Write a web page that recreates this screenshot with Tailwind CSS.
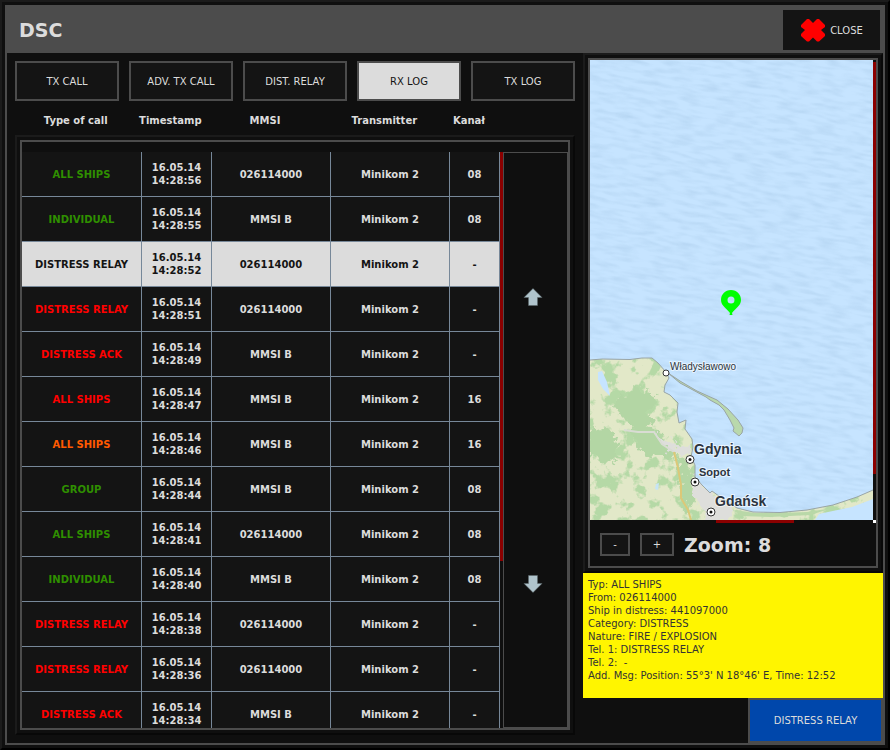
<!DOCTYPE html>
<html lang="en">

<head>
    <meta charset="UTF-8">
    <meta name="viewport" content="width=device-width, initial-scale=1.0">
    <title>DSC</title>
    <script src="https://cdn.jsdelivr.net/npm/@tailwindcss/browser@4"></script>
</head>

<body class="bg-[#0f0f0f] font-['DejaVu_Sans',sans-serif] text-[10px] leading-[13px] text-[#dcdcdc]">

    <div class="h-screen border-2 border-t-[#1b1b1b] border-l-[#1b1b1b] border-r-black border-b-black p-[3px]">
        <div class="h-full flex flex-col border-2 border-[#4c4c4c]">

            <header class="h-[46px] shrink-0 flex items-center justify-between bg-[#4c4c4c] pl-3 pr-[3px]">
                <h1 class="text-[19px] leading-6 font-bold">DSC</h1>
                <button class="w-[97px] h-10 flex items-center justify-center gap-1 bg-[#141414]">
                    <svg class="w-[26px] h-6" viewBox="0 0 26 24">
                        <path d="M1 7 L7 1 H9 L13 5 L17 1 H19 L25 7 V9 L21 12 L25 16 V18 L19 23.500 H17 L13 19.500 L9 23.500 H7 L1 18 V16 L5 12 L1 9 Z" fill="#ff0000" />
                    </svg>
                    CLOSE
                </button>
            </header>

            <div class="flex-1 min-h-0 flex">

                <main class="flex-1 min-w-0 flex flex-col p-2">
                    <nav class="grid grid-cols-5 gap-[10px]">
                        <button class="h-10 border-2 border-[#4c4c4c] bg-[#141414]">TX CALL</button>
                        <button class="h-10 border-2 border-[#4c4c4c] bg-[#141414]">ADV. TX CALL</button>
                        <button class="h-10 border-2 border-[#4c4c4c] bg-[#141414]">DIST. RELAY</button>
                        <button class="h-10 border-2 border-[#4c4c4c] bg-[#dcdcdc] text-[#141414]">RX LOG</button>
                        <button class="h-10 border-2 border-[#4c4c4c] bg-[#141414]">TX LOG</button>
                    </nav>

                    <div class="h-[34px] pt-[13px] pl-px pr-[81px]">
                        <table class="w-full table-fixed">
                            <thead>
                                <tr>
                                    <th class="p-0">Type of call</th>
                                    <th class="p-0 w-[70px]">Timestamp</th>
                                    <th class="p-0">MMSI</th>
                                    <th class="p-0">Transmitter</th>
                                    <th class="p-0 w-[50px]">Kanał</th>
                                </tr>
                            </thead>
                        </table>
                    </div>

                    <section class="flex-1 min-h-0 border-2 border-t-[#1b1b1b] border-l-[#1b1b1b] border-r-[#080808] border-b-[#080808] p-[3px]">
                        <div class="h-full flex border-2 border-[#4c4c4c] pt-[10px]">
                            <div class="flex-1 min-w-0 overflow-hidden bg-[#141414]">
                                <table class="w-full table-fixed border-separate border-spacing-0 text-center font-bold">
                                    <colgroup>
                                        <col class="w-[25.1%]">
                                        <col class="w-[70px]">
                                        <col>
                                        <col>
                                        <col class="w-[50px]">
                                    </colgroup>
                                    <tbody id="log"></tbody>
                                </table>
                            </div>
                            <div class="w-[3px]">
                                <div class="h-[71%] bg-[#8b0000]"></div>
                            </div>
                            <div class="w-[65px] flex flex-col border border-[#4c4c4c] pr-[5px]">
                                <button class="flex-1 flex items-center justify-center" aria-label="Scroll up">
                                    <svg class="w-5 h-[18px]" viewBox="0 0 20 18">
                                        <path d="M10 0.500 L19 9.500 H14.500 V17.500 H5.500 V9.500 H1 Z" fill="#b0c4cc" stroke="#5d686c" stroke-width="0.500" />
                                    </svg>
                                </button>
                                <button class="flex-1 flex items-center justify-center" aria-label="Scroll down">
                                    <svg class="w-5 h-[18px]" viewBox="0 0 20 18">
                                        <path d="M10 17.500 L19 8.500 H14.500 V0.500 H5.500 V8.500 H1 Z" fill="#b0c4cc" stroke="#5d686c" stroke-width="0.500" />
                                    </svg>
                                </button>
                            </div>
                        </div>
                    </section>
                </main>

                <aside class="w-[300px] shrink-0 flex flex-col">
                    <div class="flex-1 min-h-0 border-2 border-t-[#1b1b1b] border-l-[#1b1b1b] border-r-[#080808] border-b-[#080808] p-[3px]">
                        <div class="h-full flex flex-col border-2 border-[#4c4c4c]">
                            <div class="flex-1 min-h-0 flex">
                                <svg class="flex-1 min-w-0 h-full bg-[#c6e4ff]" viewBox="0 0 283 460" preserveAspectRatio="xMidYMid slice" font-family="'Liberation Sans', sans-serif">
                                    <defs>
                                        <!-- faint ripples on the sea -->
                                        <filter id="waves" x="0" y="0" width="100%" height="100%" color-interpolation-filters="sRGB">
                                            <feTurbulence type="fractalNoise" baseFrequency="0.05 0.22" numOctaves="2" seed="4" />
                                            <feColorMatrix values="0 0 0 0 0.66  0 0 0 0 0.79  0 0 0 0 0.91  0 2 0 0 -0.8" />
                                        </filter>
                                        <!-- woods: noise cut at a threshold -->
                                        <filter id="woods" x="0" y="0" width="100%" height="100%" color-interpolation-filters="sRGB">
                                            <feTurbulence type="fractalNoise" baseFrequency="0.07" numOctaves="4" seed="11" />
                                            <feColorMatrix values="0 0 0 0 0.71  0 0 0 0 0.85  0 0 0 0 0.65  0 9 0 0 -4.6" />
                                        </filter>
                                        <filter id="ragged">
                                            <feTurbulence type="fractalNoise" baseFrequency="0.12" numOctaves="3" seed="3" />
                                            <feDisplacementMap in="SourceGraphic" scale="16" xChannelSelector="R" yChannelSelector="G" />
                                        </filter>
                                        <path id="coast" d="M0 300 L12 299 L40 299.500 L52 298 L62 298 L68 303 L76 312 L79 318 L75 325 L74 332 L80 335 L88 343 L87 352 L89 363 L96 360 L95 369 L102 379 L103 387 L101 397 L105 405 L105 417 L112 425 L120 433 L122 431 L133 439 L147 448 L163 452 L190 452.500 L217 450 L243 445 L267 437 L283 430" />
                                        <path id="land" d="M0 300 L12 299 L40 299.500 L52 298 L62 298 L68 303 L76 312 L79 318 L75 325 L74 332 L80 335 L88 343 L87 352 L89 363 L96 360 L95 369 L102 379 L103 387 L101 397 L105 405 L105 417 L112 425 L120 433 L122 431 L133 439 L147 448 L163 452 L190 452.500 L217 450 L243 445 L267 437 L283 430 V460 H0 Z" />
                                        <clipPath id="landClip">
                                            <use href="#land" />
                                        </clipPath>
                                    </defs>
                                    <rect width="283" height="460" fill="#c6e4ff" />
                                    <rect x="-60" y="-60" width="420" height="580" filter="url(#waves)" opacity="0.500" transform="rotate(9 141 230)" />

                                    <g clip-path="url(#landClip)">
                                        <use href="#land" fill="#e2e8c8" />
                                        <rect y="295" width="283" height="165" filter="url(#woods)" />
                                        <path d="M26 340 L34 334 L46 327 L56 332 L66 334 L64 345 L57 350 L62 360 L54 368 L44 366 L36 360 L28 352 Z M0 372 L14 366 L26 376 L24 388 L30 396 L18 404 L8 396 L0 400 Z M40 372 L52 364 L70 372 L80 384 L88 392 L86 400 L74 396 L62 398 L50 390 Z M88 396 L98 404 L102 420 L106 436 L98 452 L92 440 L90 420 Z" fill="#b3d6a4" filter="url(#ragged)" />
                                        <path d="M64 372 L76 380 L90 386 L102 388 L100 398 L86 394 L72 386 Z M104 414 L122 432 L146 450 L138 460 H116 L106 436 Z" fill="#dededb" filter="url(#ragged)" />
                                        <path d="M34 370 L48 372 L64 372 L72 384 L84 392" fill="none" stroke="#d9dcd3" stroke-width="2" />
                                        <path d="M84 392 L88 408 L91 425 L91 438 L98 450 L101 460" fill="none" stroke="#dcc878" stroke-width="2" />
                                        <path d="M8 312 L12 311 L17 322 L20 336 L13 329 L8 320 Z" fill="#c6e4ff" />
                                        <path d="M66 424 L69 423 L68 430 L65 429 Z" fill="#c6e4f6" />
                                        <path d="M225 460 L229 454 L238 452 L262 447 L283 439 V460 Z" fill="#c6e4ff" />
                                        <path d="M145 450 L165 453 L190 453 L217 452 L243 448 L220 455 L180 457 L150 456 Z" fill="#b9d8a8" />
                                    </g>
                                    <use href="#coast" fill="none" stroke="#9aa5a5" stroke-width="1" />
                                    <path d="M78 313 L90 321 L107 331 L118 336 L127 340 L138 349 L148 360 L153 368 L152 373 L149 376 L143 371 L144 368 L140 360 L134 350 L129 345 L120 340 L116 337 L103 330 L90 323 Z" fill="#b9d8ac" stroke="#9aa5a5" stroke-width="1" />

                                    <g fill="#fff" stroke="#333">
                                        <circle cx="76" cy="313" r="3" />
                                        <circle cx="100" cy="399.500" r="4" />
                                        <circle cx="105" cy="422" r="4" />
                                        <circle cx="121" cy="452" r="4" />
                                    </g>
                                    <g fill="#111">
                                        <circle cx="100" cy="399.500" r="1.500" />
                                        <circle cx="105" cy="422" r="1.500" />
                                        <circle cx="121" cy="452" r="1.500" />
                                    </g>
                                    <g fill="#2b3440" stroke="#ffffff" stroke-opacity="0.600" stroke-width="2" paint-order="stroke" font-weight="bold">
                                        <text x="80" y="310" font-size="10" font-weight="normal">Władysławowo</text>
                                        <text x="104" y="394" font-size="14">Gdynia</text>
                                        <text x="109" y="416" font-size="11">Sopot</text>
                                        <text x="125" y="446" font-size="14">Gdańsk</text>
                                    </g>

                                    <path d="M141 230 C135 230 131 234.500 131 240 C131 246 137 248.500 140 253 L139.500 255 H142.500 L142 253 C145 248.500 151 246 151 240 C151 234.500 147 230 141 230 Z M141 236.500 A3.500 3.500 0 1 1 141 243.500 A3.500 3.500 0 1 1 141 236.500 Z" fill="#00ff00" fill-rule="evenodd" />
                                </svg>
                                <div class="w-[3px] pt-[2px]">
                                    <div class="h-[90%] bg-[#8b0000]"></div>
                                </div>
                            </div>
                            <div class="h-[3px] flex">
                                <div class="w-[44%]"></div>
                                <div class="w-[78px] bg-[#8b0000]"></div>
                                <div class="flex-1"></div>
                                <div class="w-[3px] bg-white"></div>
                            </div>
                            <div class="h-[43px] flex items-center gap-[10px] px-[10px]">
                                <button class="w-[30px] h-[23px] border-2 border-[#4c4c4c] bg-[#141414]" aria-label="Zoom out">-</button>
                                <button class="w-[34px] h-[23px] border-2 border-[#4c4c4c] bg-[#141414]" aria-label="Zoom in">+</button>
                                <span class="text-[19px] leading-6 font-bold">Zoom: 8</span>
                            </div>
                        </div>
                    </div>

                    <div class="h-[125px] shrink-0 bg-[#fff500] text-[#333] p-[5px] whitespace-pre-wrap">Typ: ALL SHIPS
From: 026114000
Ship in distress: 441097000
Category: DISTRESS
Nature: FIRE / EXPLOSION
Tel. 1: DISTRESS RELAY
Tel. 2:  -
Add. Msg: Position: 55°3' N 18°46' E, Time: 12:52</div>

                    <button class="self-end w-[135px] h-[45px] shrink-0 border-2 border-[#4c4c4c] bg-[#0047ab]">DISTRESS RELAY</button>
                </aside>

            </div>
        </div>
    </div>

    <script>
        const GREEN = 'text-[#2f8f00]';
        const RED = 'text-[#ff0000]';
        const ORANGE = 'text-[#ff5a00]';

        const calls = [
            ['ALL SHIPS', GREEN, '14:28:56', '026114000', '08'],
            ['INDIVIDUAL', GREEN, '14:28:55', 'MMSI B', '08'],
            ['DISTRESS RELAY', '', '14:28:52', '026114000', '-', true],
            ['DISTRESS RELAY', RED, '14:28:51', '026114000', '-'],
            ['DISTRESS ACK', RED, '14:28:49', 'MMSI B', '-'],
            ['ALL SHIPS', RED, '14:28:47', 'MMSI B', '16'],
            ['ALL SHIPS', ORANGE, '14:28:46', 'MMSI B', '16'],
            ['GROUP', GREEN, '14:28:44', 'MMSI B', '08'],
            ['ALL SHIPS', GREEN, '14:28:41', '026114000', '08'],
            ['INDIVIDUAL', GREEN, '14:28:40', 'MMSI B', '08'],
            ['DISTRESS RELAY', RED, '14:28:38', '026114000', '-'],
            ['DISTRESS RELAY', RED, '14:28:36', '026114000', '-'],
            ['DISTRESS ACK', RED, '14:28:34', 'MMSI B', '-'],
        ];

        const cell = 'p-0 border-r border-b border-[#778899]';

        document.getElementById('log').innerHTML = calls.map(([type, color, time, mmsi, channel, selected]) => `
            <tr class="h-[45px] ${selected ? 'bg-[#dcdcdc] text-[#141414]' : 'bg-[#141414]'}">
                <td class="${cell} ${color}">${type}</td>
                <td class="${cell}">16.05.14<br>${time}</td>
                <td class="${cell}">${mmsi}</td>
                <td class="${cell}">Minikom 2</td>
                <td class="${cell}">${channel}</td>
            </tr>`).join('');
    </script>
</body>

</html>
